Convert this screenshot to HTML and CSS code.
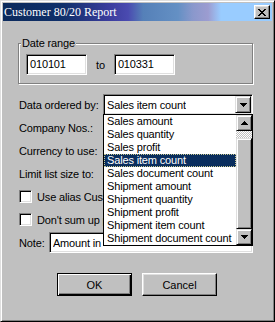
FILE: index.html
```html
<!DOCTYPE html>
<html lang="en">
<head>
  <meta charset="UTF-8" />
  <title>Customer 80/20 Report</title>
  <link rel="stylesheet" href="styles.css">
</head>
<body>
  <div class="window">
    <div class="titlebar">
      <span class="title">Customer 80/20 Report</span>
      <span class="close">
        <svg width="8" height="7" viewBox="0 0 8 7" shape-rendering="crispEdges"><path d="M0 0h2v1h-2zM6 0h2v1h-2zM1 1h2v1h-2zM5 1h2v1h-2zM2 2h4v1h-4zM3 3h2v1h-2zM2 4h4v1h-4zM1 5h2v1h-2zM5 5h2v1h-2zM0 6h2v1h-2zM6 6h2v1h-2z" fill="#000"/></svg>
      </span>
    </div>

    <div class="body">
      <fieldset class="group">
        <legend>Date range</legend>
        <div class="date-row">
          <div class="field date">010101</div>
          <span>to</span>
          <div class="field date">010331</div>
        </div>
      </fieldset>

      <div class="form">
        <div class="row">
          <label>Data ordered by:</label>
          <div class="combo wide">
            <span class="combo-text">Sales item count</span>
            <span class="arrow-btn"><svg width="7" height="4" viewBox="0 0 7 4" shape-rendering="crispEdges"><path d="M0 0h7v1h-7zM1 1h5v1h-5zM2 2h3v1h-3zM3 3h1v1h-1z" fill="#000"/></svg></span>

            <div class="droplist">
              <ul class="items">
                <li>Sales amount</li>
                <li>Sales quantity</li>
                <li>Sales profit</li>
                <li class="selected">Sales item count</li>
                <li>Sales document count</li>
                <li>Shipment amount</li>
                <li>Shipment quantity</li>
                <li>Shipment profit</li>
                <li>Shipment item count</li>
                <li>Shipment document count</li>
              </ul>
              <div class="scrollbar">
                <span class="sb-btn"><svg width="7" height="4" viewBox="0 0 7 4" shape-rendering="crispEdges"><path d="M3 0h1v1h-1zM2 1h3v1h-3zM1 2h5v1h-5zM0 3h7v1h-7z" fill="#000"/></svg></span>
                <div class="sb-track"><div class="sb-thumb"></div></div>
                <span class="sb-btn"><svg width="7" height="4" viewBox="0 0 7 4" shape-rendering="crispEdges"><path d="M0 0h7v1h-7zM1 1h5v1h-5zM2 2h3v1h-3zM3 3h1v1h-1z" fill="#000"/></svg></span>
              </div>
            </div>
          </div>
        </div>
        <div class="row"><label>Company Nos.:</label><div class="field wide"></div></div>
        <div class="row"><label>Currency to use:</label><div class="field wide"></div></div>
        <div class="row"><label>Limit list size to:</label><div class="field wide"></div></div>
        <div class="row check"><span class="checkbox"></span><label>Use alias Customer names</label></div>
        <div class="row check"><span class="checkbox"></span><label>Don't sum up per company</label></div>
        <div class="row">
          <label class="note-label">Note:</label>
          <div class="combo note"><span class="combo-text">Amount in USD</span></div>
        </div>
      </div>

      <div class="buttons">
        <button class="btn default">OK</button>
        <button class="btn">Cancel</button>
      </div>
    </div>
  </div>
</body>
</html>
```

FILE: styles.css
```css
*{margin:0;padding:0;box-sizing:border-box;}
body{font-family:"Liberation Sans",Arial,sans-serif;font-size:11px;letter-spacing:-0.15px;color:#000;background:#c0c0c0;}
ul{list-style:none;}

.window{width:275px;height:322px;background:#c0c0c0;border:1px solid;border-color:#dfdfdf #000 #000 #dfdfdf;box-shadow:inset 1px 1px #fff,inset -1px -1px #808080;padding:2px;}

.titlebar{height:18px;display:flex;align-items:center;justify-content:space-between;padding:0 2px 0 1px;background:linear-gradient(90deg,#0b2a5c 0,#10306a 60px,#3a3c9c 105px,#4a4ab0 125px,#5580b8 140px,#6490c4 175px,#8a98cc 190px,#9c9cd0 205px,#99ccff 218px,#99ccff 100%);}
.title{font-family:"Liberation Serif","Times New Roman",serif;font-size:12px;letter-spacing:0;color:#fff;white-space:nowrap;}
.close{width:16px;height:14px;display:flex;align-items:center;justify-content:center;background:#c0c0c0;border:1px solid;border-color:#fff #000 #000 #fff;box-shadow:inset -1px -1px #808080,inset 1px 1px #dfdfdf;}

.body{padding:16px 19px 0 15px;}

.group{border:1px solid #808080;box-shadow:inset 1px 1px #fff,1px 1px #fff;padding:4px 6px 8px 7px;}
.group legend{line-height:13px;padding:0 1px;margin-left:-5px;background:#c0c0c0;}
.date-row{display:flex;align-items:center;gap:9px;}

.field,.combo{height:21px;background:#fff;border:1px solid;border-color:#808080 #fff #fff #808080;box-shadow:inset 1px 1px #000,inset -1px -1px #dfdfdf;}
.field.date{width:61px;padding:3px 0 0 3px;line-height:13px;}
.field.wide{width:150px;}

.form{margin-top:10px;display:flex;flex-direction:column;gap:2px;}
.row{display:flex;align-items:center;height:21px;padding-left:1px;}
.row label{width:84px;white-space:nowrap;}
.row.check label{width:66px;overflow:hidden;}
.checkbox{width:13px;height:13px;margin-right:5px;background:#fff;border:1px solid;border-color:#808080 #fff #fff #808080;box-shadow:inset 1px 1px #000,inset -1px -1px #dfdfdf;}
.row .note-label{width:30px;}

.combo{position:relative;display:flex;align-items:center;padding-left:3px;}
.combo.wide{width:150px;}
.combo.note{width:205px;}
.combo-text{white-space:nowrap;overflow:hidden;}
.combo.note .combo-text{width:51px;}
.arrow-btn{margin:0 1px 0 auto;width:16px;height:17px;display:flex;align-items:center;justify-content:center;background:#c0c0c0;border:1px solid;border-color:#dfdfdf #000 #000 #dfdfdf;box-shadow:inset 1px 1px #fff,inset -1px -1px #808080;}

.droplist{position:absolute;top:19px;left:-1px;width:150px;height:132px;display:flex;background:#fff;border:1px solid #000;z-index:10;}
.items{flex:1;}
.items li{height:13px;line-height:13px;padding-left:3px;white-space:nowrap;}
.items li.selected{background:#0a2e5e;color:#fff;outline:1px dotted #c8c890;outline-offset:-1px;}

.scrollbar{width:16px;display:flex;flex-direction:column;}
.sb-btn{height:16px;display:flex;align-items:center;justify-content:center;background:#c0c0c0;border:1px solid;border-color:#dfdfdf #000 #000 #dfdfdf;box-shadow:inset 1px 1px #fff,inset -1px -1px #808080;}
.sb-track{flex:1;display:flex;flex-direction:column;background:repeating-conic-gradient(#fff 0 25%,#c0c0c0 0 50%) 0 0/2px 2px;}
.sb-thumb{margin-top:auto;height:91px;background:#c0c0c0;border:1px solid;border-color:#dfdfdf #000 #000 #dfdfdf;box-shadow:inset 1px 1px #fff,inset -1px -1px #808080;}

.buttons{margin-top:20px;padding-left:3px;display:flex;justify-content:center;gap:10px;}
.btn{width:75px;height:23px;font:inherit;color:#000;background:#c0c0c0;border:1px solid;border-color:#fff #000 #000 #fff;box-shadow:inset -1px -1px #808080,inset 1px 1px #dfdfdf;}
.btn.default{border-color:#000;box-shadow:inset 1px 1px #fff,inset -1px -1px #000,inset -2px -2px #808080;}
```
